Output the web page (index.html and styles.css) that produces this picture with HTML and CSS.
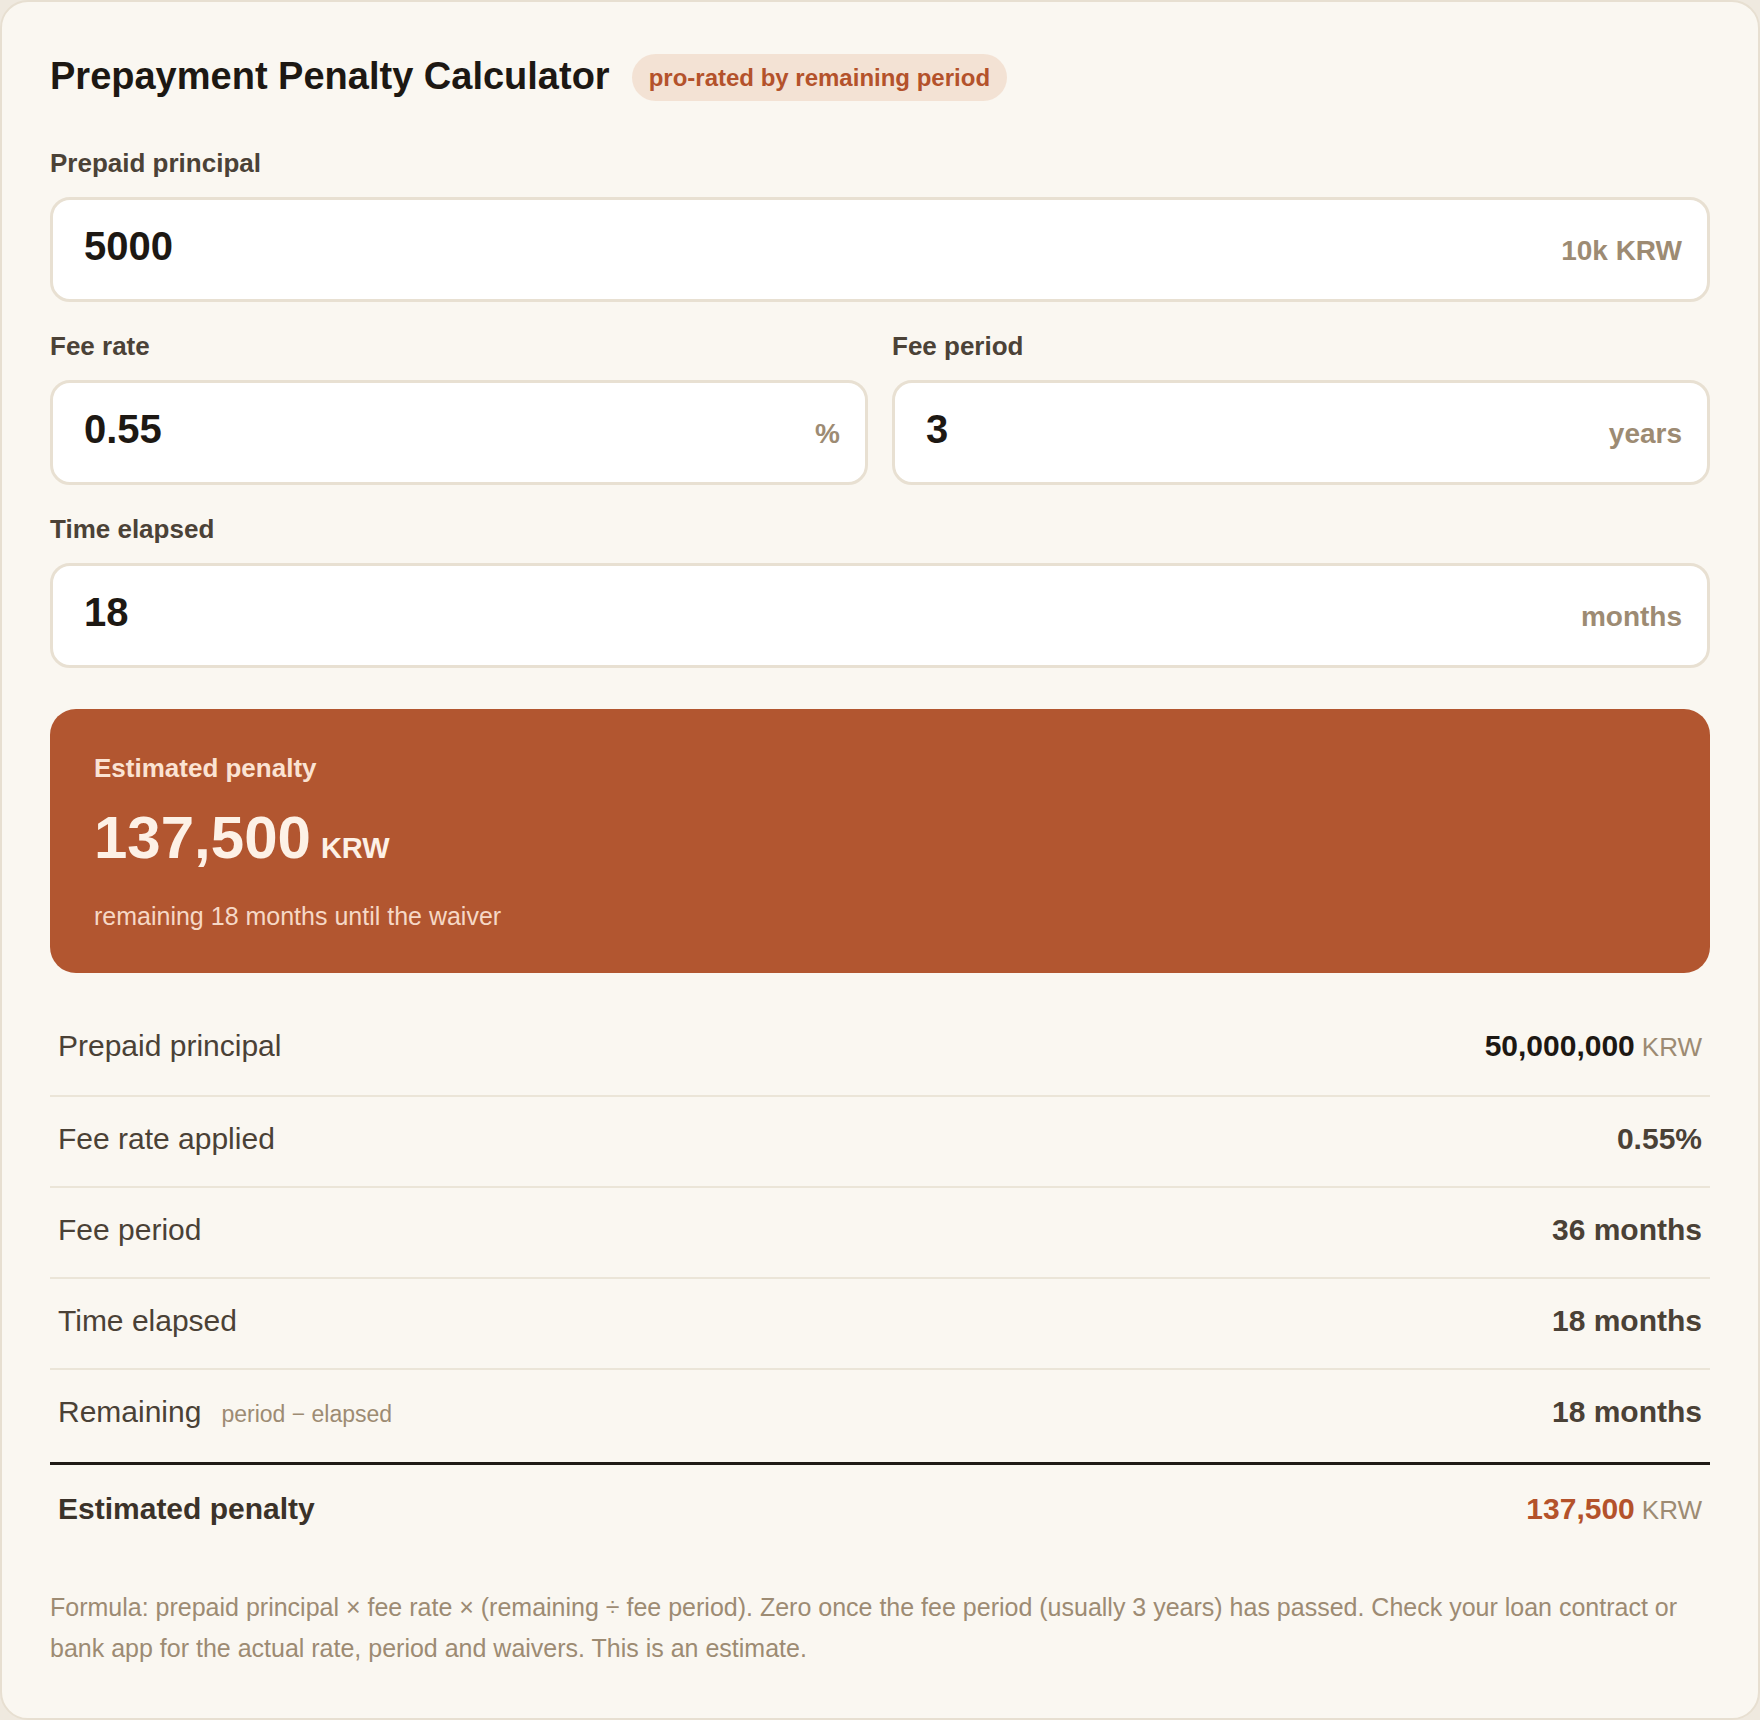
FILE: index.html
```html
<!DOCTYPE html>
<html lang="en">
<head>
<meta charset="utf-8">
<title>Prepayment Penalty Calculator</title>
<link rel="stylesheet" href="styles.css">
</head>
<body>
<main class="card">
  <header class="head">
    <h1 class="title">Prepayment Penalty Calculator</h1>
    <span class="badge">pro-rated by remaining period</span>
  </header>

  <label class="field">
    <span class="field-label">Prepaid principal</span>
    <span class="input-box">
      <input class="input" type="text" value="5000">
      <span class="suffix">10k KRW</span>
    </span>
  </label>

  <div class="field-row">
    <label class="field">
      <span class="field-label">Fee rate</span>
      <span class="input-box">
        <input class="input" type="text" value="0.55">
        <span class="suffix">%</span>
      </span>
    </label>
    <label class="field">
      <span class="field-label">Fee period</span>
      <span class="input-box">
        <input class="input" type="text" value="3">
        <span class="suffix">years</span>
      </span>
    </label>
  </div>

  <label class="field">
    <span class="field-label">Time elapsed</span>
    <span class="input-box">
      <input class="input" type="text" value="18">
      <span class="suffix">months</span>
    </span>
  </label>

  <section class="result">
    <div class="result-label">Estimated penalty</div>
    <div class="result-amount">137,500<span class="result-unit">KRW</span></div>
    <div class="result-sub">remaining 18 months until the waiver</div>
  </section>

  <div class="rows">
    <div class="row">
      <span class="row-label">Prepaid principal</span>
      <span class="row-value strong">50,000,000<span class="unit">KRW</span></span>
    </div>
    <div class="row">
      <span class="row-label">Fee rate applied</span>
      <span class="row-value">0.55%</span>
    </div>
    <div class="row">
      <span class="row-label">Fee period</span>
      <span class="row-value">36 months</span>
    </div>
    <div class="row">
      <span class="row-label">Time elapsed</span>
      <span class="row-value">18 months</span>
    </div>
    <div class="row row-last">
      <span class="row-label">Remaining<span class="note">period − elapsed</span></span>
      <span class="row-value">18 months</span>
    </div>
    <div class="row row-total">
      <span class="row-label">Estimated penalty</span>
      <span class="row-value accent">137,500<span class="unit">KRW</span></span>
    </div>
  </div>

  <p class="formula">Formula: prepaid principal × fee rate × (remaining ÷ fee period). Zero once the fee period (usually 3 years) has passed. Check your loan contract or bank app for the actual rate, period and waivers. This is an estimate.</p>
</main>
</body>
</html>
```

FILE: styles.css
```css
* { box-sizing: border-box; }

html, body {
  margin: 0;
  padding: 0;
  background: #efe9df;
}

body {
  font-family: "Liberation Sans", Arial, sans-serif;
  color: #1f1a14;
}

.card {
  width: 1760px;
  min-height: 1720px;
  background: #faf7f1;
  border: 2px solid #e7dfd1;
  border-radius: 28px;
  padding: 50px 48px 48px;
  display: flex;
  flex-direction: column;
}

.head {
  display: flex;
  align-items: center;
  gap: 22px;
  height: 48px;
  margin-bottom: 47px;
}

.title {
  margin: 0;
  font-size: 38px;
  line-height: 44px;
  font-weight: 700;
  color: #1d1813;
}

.badge {
  display: inline-flex;
  align-items: center;
  height: 47px;
  margin-top: 3px;
  padding: 0 17px;
  border-radius: 24px;
  background: #f3e2d4;
  color: #b4522b;
  font-size: 24px;
  font-weight: 700;
}

.field {
  display: flex;
  flex-direction: column;
  margin-bottom: 28px;
}

.field-label {
  font-size: 26px;
  line-height: 32px;
  font-weight: 700;
  color: #4b4237;
  margin-bottom: 18px;
}

.field-row {
  display: grid;
  grid-template-columns: 1fr 1fr;
  gap: 24px;
}

.input-box {
  display: flex;
  flex-wrap: wrap;
  align-content: center;
  align-items: baseline;
  height: 105px;
  padding: 0 25px 8px 31px;
  background: #ffffff;
  border: 3px solid #e8e0d2;
  border-radius: 20px;
}

.input {
  flex: 1;
  min-width: 0;
  border: 0;
  outline: none;
  background: transparent;
  padding: 0;
  margin: 0;
  font-family: "Liberation Sans", Arial, sans-serif;
  font-size: 40px;
  line-height: 48px;
  font-weight: 700;
  color: #1d1813;
}

.suffix {
  font-size: 28px;
  font-weight: 700;
  color: #9d8b73;
}

.result {
  margin-top: 13px;
  background: #b25630;
  border-radius: 26px;
  padding: 43px 44px 41px;
  color: #fdf3ea;
}

.result-label {
  font-size: 26px;
  line-height: 32px;
  font-weight: 700;
  color: #fbe3d3;
}

.result-amount {
  margin-top: 22px;
  font-size: 60px;
  line-height: 64px;
  font-weight: 700;
  color: #fdf1e6;
}

.result-unit {
  margin-left: 10px;
  font-size: 29px;
  line-height: 1;
  font-weight: 700;
  color: #fdf1e6;
}

.result-sub {
  margin-top: 30px;
  font-size: 25px;
  line-height: 32px;
  color: #f6d8c6;
}

.rows {
  margin-top: 31px;
  display: flex;
  flex-direction: column;
}

.row {
  display: flex;
  justify-content: space-between;
  align-items: baseline;
  padding: 25px 8px 31px;
  line-height: 33px;
  border-bottom: 2px solid #ebe5d8;
}

.row-label {
  font-size: 30px;
  color: #4a4136;
}

.note {
  margin-left: 20px;
  font-size: 23px;
  color: #9d8b73;
}

.row-value {
  font-size: 30px;
  font-weight: 700;
  color: #4a4136;
}

.row-value.strong {
  color: #1d1813;
}

.row-value.accent {
  color: #b4522b;
}

.unit {
  margin-left: 7px;
  font-size: 26px;
  font-weight: 400;
  color: #9d8b73;
}

.row-last {
  border-bottom: 3px solid #1f1a15;
}

.row-total {
  border-bottom: 0;
  padding-top: 27px;
  padding-bottom: 30px;
}

.row-total .row-label {
  font-weight: 700;
  color: #3b3229;
}

.formula {
  margin: 30px 0 0;
  font-size: 25px;
  line-height: 41px;
  color: #9d8b73;
}
```
